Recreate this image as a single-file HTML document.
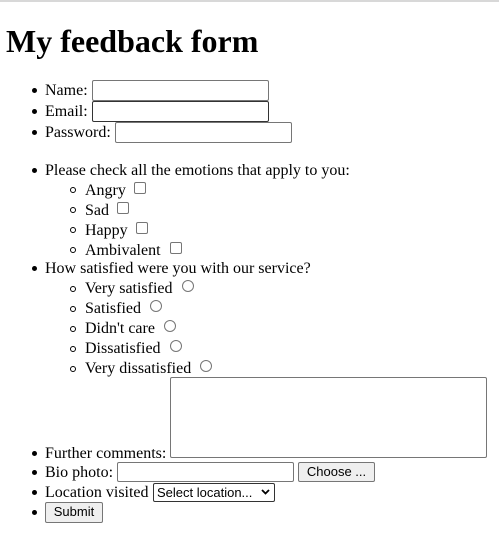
<!DOCTYPE html>
<html><head><style>
body{margin:0;width:499px;height:549px;background:#fff;font-family:"Liberation Serif",serif;font-size:16px;color:#000;position:relative;overflow:hidden}
.t{position:absolute;white-space:nowrap;line-height:18px;margin-top:1px}
.b{position:absolute;width:5px;height:5px;border-radius:50%;background:#000}
.c{position:absolute;width:4px;height:4px;border-radius:50%;border:1px solid #000}
.in{position:absolute;border:1px solid #767676;border-radius:2px;background:#fff;box-sizing:border-box}
.cb{position:absolute;width:12px;height:12px;border:1px solid #767676;border-radius:2px;box-sizing:border-box}
.rd{position:absolute;width:12px;height:12px;border:1px solid #767676;border-radius:50%;box-sizing:border-box}
.btn{position:absolute;border:1px solid #767676;border-radius:2px;background:#efefef;font-family:"Liberation Sans",sans-serif;font-size:13px;box-sizing:border-box;text-align:center;line-height:18px}
</style></head><body>
<div style="position:absolute;left:0;top:0;width:499px;height:2px;background:#d8d8d8"></div>
<div class="t" style="left:6px;top:20px;font-size:32px;font-weight:bold;line-height:40px">My feedback form</div>

<div class="b" style="left:32px;top:88px"></div><div class="t" style="left:45px;top:81px">Name:</div>
<div class="in" style="left:92px;top:80px;width:177px;height:21px"></div>
<div class="b" style="left:32px;top:109px"></div><div class="t" style="left:45px;top:102px">Email:</div>
<div class="in" style="left:92px;top:101px;width:177px;height:21px;border-color:#333"></div>
<div class="b" style="left:32px;top:130px"></div><div class="t" style="left:45px;top:123px">Password:</div>
<div class="in" style="left:115px;top:122px;width:177px;height:21px"></div>

<div class="b" style="left:32px;top:168px"></div><div class="t" style="left:45px;top:161px">Please check all the emotions that apply to you:</div>
<div class="c" style="left:70px;top:187px"></div><div class="t" style="left:85px;top:181px">Angry</div><div class="cb" style="left:134px;top:182px"></div>
<div class="c" style="left:70px;top:207px"></div><div class="t" style="left:85px;top:201px">Sad</div><div class="cb" style="left:117px;top:202px"></div>
<div class="c" style="left:70px;top:227px"></div><div class="t" style="left:85px;top:221px">Happy</div><div class="cb" style="left:136px;top:222px"></div>
<div class="c" style="left:70px;top:247px"></div><div class="t" style="left:85px;top:241px">Ambivalent</div><div class="cb" style="left:170px;top:242px"></div>
<div class="b" style="left:32px;top:266px"></div><div class="t" style="left:45px;top:259px">How satisfied were you with our service?</div>
<div class="c" style="left:70px;top:286px"></div><div class="t" style="left:85px;top:279px">Very satisfied</div><div class="rd" style="left:182px;top:280px"></div>
<div class="c" style="left:70px;top:306px"></div><div class="t" style="left:85px;top:299px">Satisfied</div><div class="rd" style="left:150px;top:300px"></div>
<div class="c" style="left:70px;top:326px"></div><div class="t" style="left:85px;top:319px">Didn't care</div><div class="rd" style="left:164px;top:320px"></div>
<div class="c" style="left:70px;top:346px"></div><div class="t" style="left:85px;top:339px">Dissatisfied</div><div class="rd" style="left:170px;top:340px"></div>
<div class="c" style="left:70px;top:366px"></div><div class="t" style="left:85px;top:359px">Very dissatisfied</div><div class="rd" style="left:200px;top:360px"></div>

<div class="in" style="left:170px;top:377px;width:317px;height:81px"></div>
<div class="b" style="left:32px;top:451px"></div><div class="t" style="left:45px;top:444px">Further comments:</div>
<div class="b" style="left:32px;top:470px"></div><div class="t" style="left:45px;top:463px">Bio photo:</div>
<div class="in" style="left:117px;top:462px;width:177px;height:20px"></div>
<div class="btn" style="left:298px;top:462px;width:77px;height:20px">Choose ...</div>
<div class="b" style="left:32px;top:490px"></div><div class="t" style="left:45px;top:483px">Location visited</div>
<div class="in" style="left:153px;top:483px;width:122px;height:19px;font-family:'Liberation Sans',sans-serif;font-size:13px;line-height:17px;padding-left:3px;border-color:#333">Select location...<svg style="position:absolute;right:4px;top:5px" width="9" height="6" viewBox="0 0 9 6"><path d="M1 1 L4.5 4.5 L8 1" fill="none" stroke="#000" stroke-width="1.8"/></svg></div>
<div class="b" style="left:32px;top:510px"></div>
<div class="btn" style="left:45px;top:502px;width:58px;height:21px;font-size:13px">Submit</div>
</body></html>
